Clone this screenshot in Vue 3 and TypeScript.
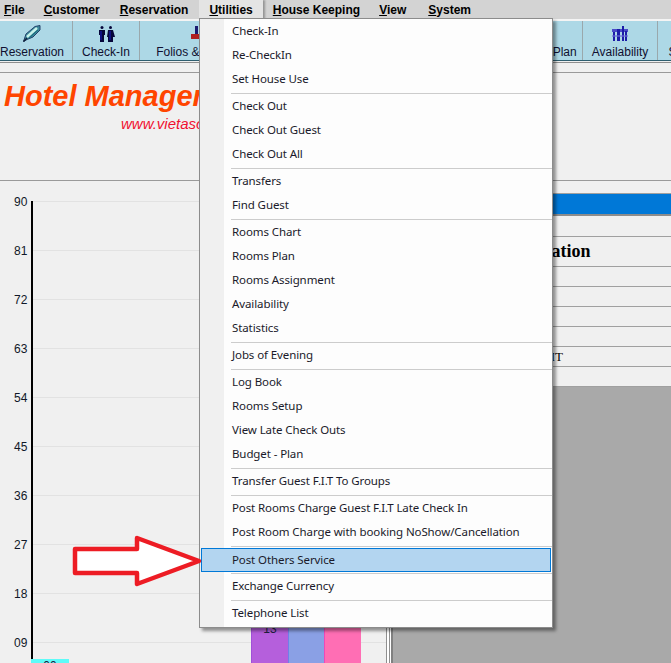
<template>
  <div class="app">
    <nav class="menubar">
      <div
        v-for="m in menus"
        :key="m"
        class="menubar-item"
        :class="{ active: m === 'Utilities' }"
      ><u>{{ m[0] }}</u>{{ m.slice(1) }}</div>
    </nav>

    <div class="toolbar">
      <div v-for="t in tools" :key="t.label" class="tool" :style="{ width: t.width + 'px' }">
        <span class="tool-icon">
          <svg v-if="t.icon === 'pen'" width="18" height="17" viewBox="0 0 18 17">
            <path d="M0.5 16.5 L3 9 L12 1.5 L17 0.5 L17 5 L10 12 L4 14.5 Z" fill="#3f8f9f" stroke="#24406a" stroke-width="1" />
            <path d="M4 12 L14 3" stroke="#c8f2ea" stroke-width="2.5" />
            <path d="M6 13 L15 5" stroke="#1f6f80" stroke-width="1.2" />
            <path d="M0.5 16.5 L4 13" stroke="#10203a" stroke-width="1.5" />
          </svg>
          <svg v-else-if="t.icon === 'people'" width="17" height="16" viewBox="0 0 17 16">
            <g fill="#06063a">
              <circle cx="4" cy="1.5" r="1.5" />
              <path d="M1 4 H7 V9 H6 V16 H2 V9 H1 Z" />
              <circle cx="12.5" cy="1.5" r="1.5" />
              <path d="M10 4 H15 L17 11 H15 V16 H10 V11 H9 Z" />
            </g>
            <path d="M3 5 V14 M12 5 V14" stroke="#1818c8" stroke-width="1" />
          </svg>
          <svg v-else-if="t.icon === 'folio'" width="18" height="18" viewBox="0 0 18 18">
            <path d="M8 1 L11 1 L11 9 L8 9 Z" fill="#1c1c70" />
            <path d="M4 9 H12 V14 H4 Z" fill="#b02020" />
          </svg>
          <svg v-else-if="t.icon === 'bars'" width="16" height="15" viewBox="0 0 16 15">
            <rect x="0" y="3" width="16" height="3" fill="#4a4ac8" />
            <g fill="#1c1ca8">
              <rect x="1" y="6" width="2" height="9" />
              <rect x="5" y="3" width="3" height="12" />
              <rect x="10" y="0" width="2" height="15" />
              <rect x="13" y="5" width="2" height="10" />
            </g>
            <rect x="0" y="9" width="16" height="2" fill="#6a6ad8" opacity="0.6" />
          </svg>
        </span>
        <span class="tool-label">{{ t.label }}</span>
      </div>
    </div>

    <div class="strip"></div>

    <header class="banner">
      <h1 class="banner-title">Hotel Management System</h1>
      <a class="banner-link">www.vietasoft.com</a>
    </header>

    <main class="content">
      <section class="chart">
        <div class="plot">
          <div v-for="tick in ticks" :key="tick" class="tick">
            <span class="tick-label">{{ tick }}</span>
          </div>
          <div class="bars">
            <div class="bar cyan">00</div>
            <div class="bar purple">13</div>
            <div class="bar blue"></div>
            <div class="bar pink"></div>
          </div>
        </div>
      </section>

      <div class="splitter"></div>

      <section class="info">
        <div class="info-gap"></div>
        <div class="info-head"></div>
        <div class="info-row first"></div>
        <div class="info-row title"><span>Hotel Information</span></div>
        <div class="info-row"></div>
        <div class="info-row"></div>
        <div class="info-row"></div>
        <div class="info-row"></div>
        <div class="info-row unit"><span>UNIT</span></div>
        <div class="info-row"></div>
        <div class="info-empty"></div>
      </section>
    </main>

    <div class="dropdown">
      <template v-for="(group, i) in groups" :key="i">
        <div v-if="i > 0" class="sep"></div>
        <div
          v-for="item in group"
          :key="item"
          class="drop-item"
          :class="{ selected: item === 'Post Others Service' }"
        >{{ item }}</div>
      </template>
    </div>

    <svg class="arrow" width="140" height="60" viewBox="0 0 140 60">
      <path
        d="M4 14 H66 V3 L128 26 L66 49 V38 H4 Z"
        fill="#fff"
        stroke="#ed1c24"
        stroke-width="4.5"
        stroke-linejoin="round"
      />
    </svg>
  </div>
</template>

<script setup lang="ts">
const menus = ['File', 'Customer', 'Reservation', 'Utilities', 'House Keeping', 'View', 'System']

const tools = [
  { label: 'Reservation', width: 81, icon: 'pen' },
  { label: 'Check-In', width: 67, icon: 'people' },
  { label: 'Folios & Guest', width: 112, icon: 'folio' },
  { label: 'Check Out', width: 90, icon: '' },
  { label: 'Rooms Chart', width: 82, icon: '' },
  { label: 'Transfers', width: 82, icon: '' },
  { label: 'Rooms Plan', width: 77, icon: '' },
  { label: 'Availability', width: 75, icon: 'bars' },
  { label: 'Statistics', width: 70, icon: '' },
]

const ticks = ['90', '81', '72', '63', '54', '45', '36', '27', '18', '09']

const groups = [
  ['Check-In', 'Re-CheckIn', 'Set House Use'],
  ['Check Out', 'Check Out Guest', 'Check Out All'],
  ['Transfers', 'Find Guest'],
  ['Rooms Chart', 'Rooms Plan', 'Rooms Assignment', 'Availability', 'Statistics'],
  ['Jobs of Evening'],
  ['Log Book', 'Rooms Setup', 'View Late Check Outs', 'Budget - Plan'],
  ['Transfer Guest F.I.T To Groups'],
  ['Post Rooms Charge Guest F.I.T Late Check In', 'Post Room Charge with booking NoShow/Cancellation'],
  ['Post Others Service'],
  ['Exchange Currency'],
  ['Telephone List'],
]
</script>

<style>
html, body {
  margin: 0;
  background: #f0f0f0;
}
</style>

<style scoped>
.app {
  position: relative;
  width: 671px;
  height: 663px;
  overflow: hidden;
  background: #f0f0f0;
  font-family: "Liberation Sans", Arial, sans-serif;
  font-size: 12px;
  color: #000;
}

.menubar {
  display: flex;
  height: 19px;
  background: #d3d3d3;
  border-bottom: 2px solid #f4f4f4;
}
.menubar-item {
  padding: 0 10px;
  font-weight: bold;
  line-height: 20px;
  height: 19px;
  white-space: nowrap;
}
.menubar-item:nth-child(1) {
  padding: 0 9px 0 4px;
}
.menubar-item:nth-child(3) {
  padding-right: 11px;
}
.menubar-item:nth-child(5) {
  padding-right: 9px;
}
.menubar-item:nth-child(6) {
  padding-right: 12px;
}
.menubar-item.active {
  background: #e4e4e4;
  box-shadow: 2px 0 2px rgba(0, 0, 0, 0.3);
  position: relative;
}

.toolbar {
  display: flex;
  height: 39px;
  background: #add8e6;
  border-bottom: 1px solid #2f5f70;
  overflow: hidden;
}
.tool {
  flex: none;
  box-sizing: border-box;
  display: flex;
  flex-direction: column;
  align-items: center;
  border-right: 1px solid #9aa8ac;
  white-space: nowrap;
}
.tool:first-child {
  margin-left: -8px;
}
.tool-icon {
  height: 25px;
  padding-top: 2px;
  box-sizing: border-box;
  display: flex;
  align-items: center;
  justify-content: center;
}
.tool-label {
  line-height: 16px;
  color: #101030;
}

.strip {
  height: 9px;
  margin-top: 1px;
  background: #f0f0f0;
  border-top: 1px solid #8f8f8f;
  border-bottom: 1px solid #9a9a9a;
}

.banner {
  box-sizing: border-box;
  height: 108px;
  padding-top: 6px;
  border-bottom: 1px solid #9a9a9a;
  white-space: nowrap;
}
.banner-title {
  margin: 0 0 0 4px;
  font-size: 29px;
  line-height: 34px;
  font-style: italic;
  font-weight: bold;
  color: #ff4500;
}
.banner-link {
  display: block;
  margin: 3px 0 0 121px;
  font-size: 15px;
  line-height: 16px;
  font-style: italic;
  color: #f01030;
}

.content {
  display: flex;
  height: 482px;
}

.chart {
  flex: none;
  width: 387px;
  overflow: hidden;
  box-sizing: border-box;
  border-right: 1px solid #8f8f8f;
}
.plot {
  position: relative;
  margin: 20px 0 0 31px;
  border-left: 2px solid #000;
}
.tick {
  position: relative;
  height: 48px;
  border-top: 1px solid #e2e2e2;
}
.tick-label {
  position: absolute;
  left: -19px;
  top: -7px;
  line-height: 14px;
  color: #101828;
}
.bars {
  position: absolute;
  left: -2px;
  bottom: 0;
  display: flex;
  align-items: flex-end;
}
.bar {
  box-sizing: border-box;
  text-align: center;
  line-height: 14px;
  color: #202040;
}
.cyan {
  width: 38px;
  height: 32px;
  margin-right: 182px;
  background: #5ffbf8;
}
.purple {
  width: 37px;
  height: 70px;
  padding-top: 1px;
  background: #b55fdc;
  border-left: 1px solid #a050d8;
}
.blue {
  width: 36px;
  height: 70px;
  background: #8aa0e5;
  border-left: 1px solid #6f80e8;
}
.pink {
  width: 37px;
  height: 70px;
  background: #ff6eb4;
  border-left: 1px solid #f048b8;
}

.splitter {
  flex: none;
  width: 4px;
  background: linear-gradient(to right, #fff 2px, #8f8f8f 2px, #8f8f8f 3px, #fff 3px);
}

.info {
  flex: 1;
  display: flex;
  flex-direction: column;
  box-sizing: border-box;
  border-left: 2px solid #808080;
}
.info-gap {
  height: 12px;
  border-bottom: 1px solid #a0a0a0;
}
.info-head {
  height: 20px;
  background: #0078d7;
  border-bottom: 2px solid #8c8c8c;
}
.info-row {
  flex: none;
  height: 19px;
  border-bottom: 1px solid #a0a0a0;
  white-space: nowrap;
  font-family: "Liberation Serif", "Times New Roman", serif;
}
.info-row.first {
  height: 20px;
}
.title {
  height: 29px;
  font-size: 18px;
  font-weight: bold;
  line-height: 29px;
  padding-left: 57px;
}
.unit {
  font-size: 13px;
  line-height: 20px;
  padding-left: 139px;
}
.info-empty {
  flex: 1;
  background: #a9a9a9;
}

.dropdown {
  position: absolute;
  left: 199px;
  top: 18px;
  width: 352px;
  padding-bottom: 2px;
  border: 1px solid #8c8c8c;
  background: linear-gradient(to right, #f0f0f0 24px, #fdfdfd 24px);
  box-shadow: 3px 3px 3px rgba(0, 0, 0, 0.4);
  font-family: "Noto Sans", sans-serif;
  font-size: 11.5px;
  letter-spacing: -0.1px;
  color: #1a1a2a;
}
.drop-item {
  box-sizing: border-box;
  height: 24px;
  margin: 0 1px;
  padding-left: 31px;
  line-height: 24px;
  white-space: nowrap;
}
.drop-item.selected {
  margin-top: 1px;
  margin-bottom: -1px;
  background: #b3d5f0;
  outline: 1px solid #0078d7;
  outline-offset: -1px;
}
.sep {
  height: 1px;
  margin: 2px 0 0 31px;
  background: #cccccc;
}

.arrow {
  position: absolute;
  left: 71px;
  top: 535px;
}
</style>
